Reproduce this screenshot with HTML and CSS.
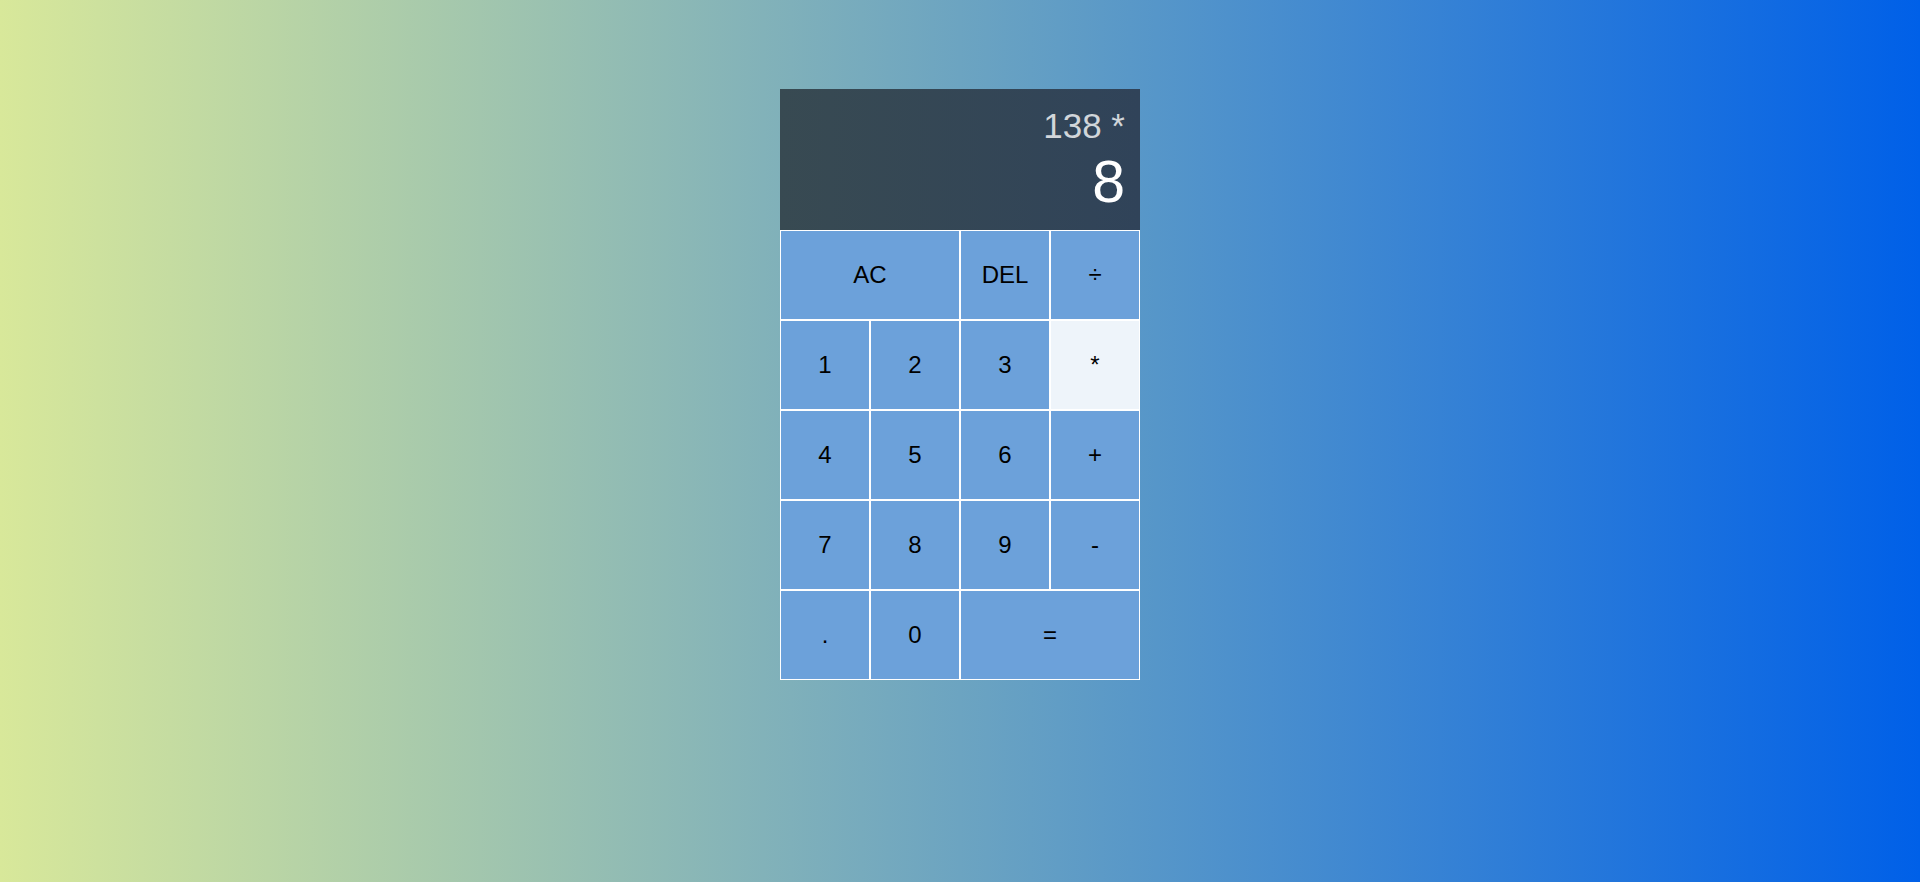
FILE: index.html
```html
<!DOCTYPE html>
<html lang="en">
<head>
<meta charset="utf-8">
<title>Calculator</title>
<link rel="stylesheet" href="styles.css">
</head>
<body>
  <div class="calculator">
    <div class="output">
      <div class="previous">138 *</div>
      <div class="current">8</div>
    </div>
    <button class="span-two">AC</button>
    <button>DEL</button>
    <button>÷</button>
    <button>1</button>
    <button>2</button>
    <button>3</button>
    <button class="active">*</button>
    <button>4</button>
    <button>5</button>
    <button>6</button>
    <button>+</button>
    <button>7</button>
    <button>8</button>
    <button>9</button>
    <button>-</button>
    <button>.</button>
    <button>0</button>
    <button class="span-two">=</button>
  </div>
</body>
</html>
```

FILE: styles.css
```css
* {
  box-sizing: border-box;
}

html, body {
  margin: 0;
  padding: 0;
}

body {
  min-height: 882px;
  background: linear-gradient(to right, #d8e89a, #0060e8);
  font-family: "Liberation Sans", Arial, sans-serif;
}

.calculator {
  display: grid;
  justify-content: center;
  grid-template-columns: repeat(4, 90px);
  grid-template-rows: 141px repeat(5, 90px);
  padding-top: 89px;
}

.calculator > button {
  cursor: pointer;
  font-family: "Liberation Sans", Arial, sans-serif;
  font-size: 24px;
  color: #000;
  border: 1px solid #fff;
  outline: none;
  background-color: #6ca1da;
  padding: 0;
  margin: 0;
}

.calculator > button.active {
  background-color: #eef4fa;
}

.span-two {
  grid-column: span 2;
}

.output {
  grid-column: 1 / -1;
  background: linear-gradient(to right, #384a52, #304359);
  display: flex;
  flex-direction: column;
  align-items: flex-end;
  justify-content: center;
  padding: 15px;
  word-wrap: break-word;
  word-break: break-all;
}

.previous {
  color: rgba(255, 255, 255, 0.78);
  font-size: 35px;
  line-height: 44px;
}

.current {
  color: #fff;
  font-size: 59px;
}
```
